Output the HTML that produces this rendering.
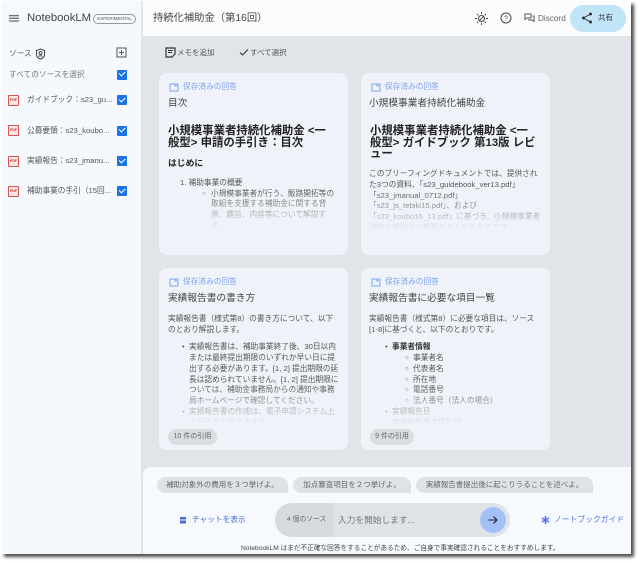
<!DOCTYPE html>
<html lang="ja"><head><meta charset="utf-8">
<style>
html,body{margin:0;padding:0;background:#fff}
body{width:640px;height:563px;overflow:hidden;position:relative;font-family:"Liberation Sans","Noto Sans CJK JP",sans-serif;color:#3c4043}
#all{position:absolute;left:0;top:0;width:640px;height:563px;filter:blur(.3px)}
#win{position:absolute;left:1px;top:1px;width:630px;height:553px;background:#e1e5ea;overflow:hidden}
#shadow{position:absolute;left:4px;top:4px;width:630px;height:553px;background:rgba(0,0,0,.7);filter:blur(1.5px)}
.a{position:absolute;white-space:nowrap}
#side{position:absolute;left:0;top:0;width:140px;height:553px;background:#f5f8fd}
#head{position:absolute;left:142px;top:0;width:488px;height:35px;background:#fbfcfe}
.src{font-size:7.7px;color:#555;line-height:12px}
.cb{position:absolute;left:116px;width:10px;height:10px;background:#1a73e8;border-radius:1px}
.cb:after{content:"";position:absolute;left:2.2px;top:1.6px;width:5px;height:2.6px;border-left:1.2px solid #fff;border-bottom:1.2px solid #fff;transform:rotate(-45deg)}
.pdf{position:absolute;left:7px;width:9px;height:9px;border:1px solid #d9534f;border-radius:1px;background:#fbe9e8;color:#c9302c;font-size:3.5px;line-height:9px;text-align:center;font-weight:bold}
.card{position:absolute;width:189px;height:182px;background:#eff3f9;border-radius:8px;overflow:hidden}
.tag{position:absolute;left:10px;top:8px;font-size:7.7px;line-height:12px;color:#7fa3ee;white-space:nowrap;padding-left:14px}
.tag svg{position:absolute;left:0;top:2px}
.ttl{position:absolute;left:9px;top:23px;font-size:9.7px;line-height:15px;color:#444;white-space:nowrap}
.h1{position:absolute;left:9px;top:53px;font-size:11.4px;line-height:11.5px;font-weight:bold;color:#222;white-space:nowrap}
.p{position:absolute;font-size:7.7px;line-height:10.8px;color:#555;white-space:nowrap}
.fade{position:absolute;left:0;top:117px;width:189px;height:40px;background:linear-gradient(to bottom,rgba(239,243,249,0),#eff3f9 100%)}
.solid{position:absolute;left:0;top:157px;width:189px;height:25px;background:#eff3f9}
.cite{position:absolute;left:9px;top:161px;height:16px;line-height:16px;border-radius:8px;background:#dadde0;font-size:7px;color:#666;white-space:nowrap;text-align:center}
.chip{position:absolute;top:477px;height:16px;line-height:16px;background:#dfe3e8;border-radius:8px 8px 0 8px;font-size:7.5px;color:#666;text-align:center;white-space:nowrap}
</style></head><body>
<div id="all">
<div id="shadow"></div>
<div id="win">
 <div id="side">
  <svg class="a" style="left:8px;top:13px" width="12" height="10"><path d="M0 1.700h10M0 4.300h10M0 7h10" stroke="#444" stroke-width="1"/></svg>
  <div class="a" style="left:26px;top:9px;font-size:11.300px;line-height:17px;color:#444;font-weight:500">NotebookLM</div>
  <div class="a" style="left:92px;top:13px;width:41px;height:8px;border:1px solid #999;border-radius:6px;font-size:4.500px;line-height:8px;text-align:center;color:#555">EXPERIMENTAL</div>
  <div class="a" style="left:8px;top:47px;font-size:7.700px;line-height:12px;color:#555">ソース</div>
  <svg class="a" style="left:34px;top:47px" width="11" height="12" viewBox="0 0 11 12"><path d="M5.500 1 9.500 2.500V6.500C9.500 9 7.500 10.500 5.500 11 3.500 10.500 1.500 9 1.500 6.500V2.500Z" fill="none" stroke="#444" stroke-width="1"/><circle cx="5.500" cy="5" r="1.500" fill="none" stroke="#444" stroke-width=".9"/><path d="M3.500 8.500C4.500 7.500 6.500 7.500 7.500 8.500" stroke="#444" fill="none" stroke-width=".9"/></svg>
  <svg class="a" style="left:115px;top:46px" width="11" height="11"><rect x="1" y="1" width="9" height="9" fill="none" stroke="#555" stroke-width="1"/><path d="M5.500 3v5M3 5.500h5" stroke="#555" stroke-width="1"/></svg>
  <div class="a src" style="left:8px;top:67.700px;color:#777">すべてのソースを選択</div><div class="cb" style="top:68.700px"></div>
  <div class="pdf" style="top:93.500px">PDF</div><div class="a src" style="left:26px;top:93px">ガイドブック：s23_gu...</div><div class="cb" style="top:94px"></div>
  <div class="pdf" style="top:124px">PDF</div><div class="a src" style="left:26px;top:124px">公募要領：s23_koubo...</div><div class="cb" style="top:124.700px"></div>
  <div class="pdf" style="top:154.500px">PDF</div><div class="a src" style="left:26px;top:154px">実績報告：s23_jmanu...</div><div class="cb" style="top:155px"></div>
  <div class="pdf" style="top:184.500px">PDF</div><div class="a src" style="left:26px;top:184px">補助事業の手引（15回...</div><div class="cb" style="top:185px"></div>
 </div>
 <div id="head"></div>
 <div class="a" style="left:152px;top:9px;font-size:10.300px;line-height:17px;color:#444">持続化補助金（第16回）</div>
 <svg class="a" style="left:473px;top:10px" width="15" height="15" viewBox="0 0 15 15"><circle cx="7.500" cy="7.500" r="3" fill="none" stroke="#444"/><path d="M7.500 1v2M7.500 12v2M1 7.500h2M12 7.500h2M3 3l1.400 1.400M10.600 10.600 12 12M3 12l1.400-1.400M10.600 4.400 12 3M5.500 9.500l4-4" stroke="#444" stroke-width=".9"/></svg>
 <svg class="a" style="left:499px;top:11px" width="12" height="12" viewBox="0 0 12 12"><circle cx="6" cy="6" r="5" fill="none" stroke="#444"/><text x="6" y="8.500" font-size="7" text-anchor="middle" fill="#444" font-family="Liberation Sans">?</text></svg>
 <svg class="a" style="left:523px;top:12px" width="11" height="9" viewBox="0 0 11 9"><path d="M1 1h6v4H3L1 6.500ZM8.500 3h1.500v5.500L8 7H4" fill="none" stroke="#555"/></svg>
 <div class="a" style="left:537px;top:10px;font-size:8.200px;line-height:15px;color:#666">Discord</div>
 <div class="a" style="left:569px;top:4px;width:56px;height:27px;border-radius:13.500px;background:#c2e4f8"></div>
 <svg class="a" style="left:580px;top:11px" width="12" height="12" viewBox="0 0 12 12"><path d="M9.500 2 2.500 6 9.500 10" fill="none" stroke="#333" stroke-width="1"/><circle cx="9.500" cy="2" r="1.500" fill="#333"/><circle cx="2.500" cy="6" r="1.500" fill="#333"/><circle cx="9.500" cy="10" r="1.500" fill="#333"/></svg>
 <div class="a" style="left:597px;top:10px;font-size:7.500px;line-height:14px;color:#333">共有</div>

 <svg class="a" style="left:164px;top:46px" width="12" height="11" viewBox="0 0 12 11"><path d="M1 1h9v6l-3 3H1Z" fill="none" stroke="#333" stroke-width="1.200"/><path d="M3 3.500h5M3 5.500h4" stroke="#333"/></svg>
 <div class="a" style="left:176px;top:45px;font-size:7.500px;line-height:13px;color:#555">メモを追加</div>
 <svg class="a" style="left:238px;top:47px" width="10" height="9" viewBox="0 0 10 9"><path d="M1 4.500 3.500 7 9 1.500" fill="none" stroke="#333" stroke-width="1.100"/></svg>
 <div class="a" style="left:249px;top:45px;font-size:7.500px;line-height:13px;color:#555">すべて選択</div>

 <div class="card" style="left:158px;top:72px">
  <div class="tag"><svg width="10" height="9" viewBox="0 0 10 9"><path d="M6 1H1v7h8V4M6 1h3v2H6Z" fill="none" stroke="#7fa3ee"/></svg>保存済みの回答</div>
  <div class="ttl">目次</div>
  <div class="h1">小規模事業者持続化補助金 &lt;一<br>般型&gt; 申請の手引き：目次</div>
  <div class="a" style="left:9px;top:84px;font-size:8.800px;line-height:13px;font-weight:bold;color:#222">はじめに</div>
  <div class="p" style="left:21px;top:104px;line-height:12px">1. 補助事業の概要</div>
  <div class="p" style="left:43px;top:115.600px;font-size:6px">○</div>
  <div class="p" style="left:52px;top:115.600px;line-height:10.700px">小規模事業者が行う、販路開拓等の<br>取組を支援する補助金に関する背<br>景、趣旨、内容等について解説す<br>る。</div>
  <div class="fade"></div><div class="solid"></div>
 </div>
 <div class="card" style="left:360px;top:72px">
  <div class="tag"><svg width="10" height="9" viewBox="0 0 10 9"><path d="M6 1H1v7h8V4M6 1h3v2H6Z" fill="none" stroke="#7fa3ee"/></svg>保存済みの回答</div>
  <div class="ttl" style="left:8px">小規模事業者持続化補助金</div>
  <div class="h1">小規模事業者持続化補助金 &lt;一<br>般型&gt; ガイドブック 第13版 レビ<br>ュー</div>
  <div class="p" style="left:8px;top:96px;line-height:10.750px">このブリーフィングドキュメントでは、提供され<br>た3つの資料、「s23_guidebook_ver13.pdf」<br>「s23_jmanual_0712.pdf」<br>「s23_js_tebiki15.pdf」、および<br>「s23_koubo16_13.pdf」に基づき、小規模事業者<br>持続化補助金の概要をまとめたものです。</div>
  <div class="fade"></div><div class="solid"></div>
 </div>
 <div class="card" style="left:158px;top:267px">
  <div class="tag"><svg width="10" height="9" viewBox="0 0 10 9"><path d="M6 1H1v7h8V4M6 1h3v2H6Z" fill="none" stroke="#7fa3ee"/></svg>保存済みの回答</div>
  <div class="ttl">実績報告書の書き方</div>
  <div class="p" style="left:9px;top:45px;line-height:11px">実績報告書（様式第8）の書き方について、以下<br>のとおり解説します。</div>
  <div class="p" style="left:23px;top:74.300px">•<br><br><br><br><br><br>•</div>
  <div class="p" style="left:30px;top:74.300px">実績報告書は、補助事業終了後、30日以内<br>または最終提出期限のいずれか早い日に提<br>出する必要があります。[1, 2] 提出期限の延<br>長は認められていません。[1, 2] 提出期限に<br>ついては、補助金事務局からの通知や事務<br>局ホームページで確認してください。<br>実績報告書の作成は、電子申請システム上<br>で行うことができます。</div>
  <div class="fade"></div><div class="solid"></div>
  <div class="cite" style="width:49px">10 件の引用</div>
 </div>
 <div class="card" style="left:360px;top:267px">
  <div class="tag"><svg width="10" height="9" viewBox="0 0 10 9"><path d="M6 1H1v7h8V4M6 1h3v2H6Z" fill="none" stroke="#7fa3ee"/></svg>保存済みの回答</div>
  <div class="ttl" style="left:8px">実績報告書に必要な項目一覧</div>
  <div class="p" style="left:8px;top:45px;line-height:11px">実績報告書（様式第8）に必要な項目は、ソース<br>[1-8]に基づくと、以下のとおりです。</div>
  <div class="p" style="left:24px;top:74.300px">•<br><br><br><br><br><br>•</div>
  <div class="p" style="left:31px;top:74.300px"><b style="color:#333">事業者情報</b></div>
  <div class="p" style="left:44px;top:85.100px;font-size:6px">○<br>○<br>○<br>○<br>○</div>
  <div class="p" style="left:52px;top:85.100px">事業者名<br>代表者名<br>所在地<br>電話番号<br>法人番号（法人の場合）</div>
  <div class="p" style="left:31px;top:139.100px">実績報告日<br>実績報告書の提出日</div>
  <div class="fade"></div><div class="solid"></div>
  <div class="cite" style="width:44px">9 件の引用</div>
 </div>

 <div class="a" style="left:142px;top:466px;width:488px;height:87px;background:#f6f9fe;border-radius:8px 0 0 0"></div>
</div>
<div class="chip" style="left:157px;width:131px">補助対象外の費用を３つ挙げよ。</div>
<div class="chip" style="left:293px;width:118px">加点審査項目を２つ挙げよ。</div>
<div class="chip" style="left:416px;width:177px">実績報告書提出後に起こりうることを述べよ。</div>
<svg class="a" style="left:180px;top:517px" width="7" height="7"><rect width="6" height="2.500" y="0" fill="#4a6fd0"/><rect width="6" height="3" y="3.500" fill="#4a6fd0"/></svg>
<div class="a" style="left:192px;top:513px;font-size:7.700px;line-height:14px;color:#4c6fd4">チャットを表示</div>
<div class="a" style="left:275px;top:503px;width:235px;height:34px;border-radius:17px;background:#dfe3e8;overflow:hidden"><div class="a" style="left:0;top:0;width:58px;height:34px;background:#d7dbe0"></div></div>
<div class="a" style="left:287px;top:514px;font-size:6.800px;line-height:12px;color:#666">4 個のソース</div>
<div class="a" style="left:338px;top:513px;font-size:8.700px;line-height:14px;color:#777">入力を開始します...</div>
<div class="a" style="left:480px;top:507px;width:26px;height:26px;border-radius:50%;background:#a3c1f7"></div>
<svg class="a" style="left:487px;top:514px" width="12" height="12" viewBox="0 0 12 12"><path d="M1.500 6h8.500M6.500 2.500 10 6 6.500 9.500" fill="none" stroke="#222" stroke-width="1.100"/></svg>
<svg class="a" style="left:541px;top:515px" width="9" height="10" viewBox="0 0 9 10"><path d="M4.500 1v8M1 3l7 4M8 3 1 7" stroke="#5a6fe0" stroke-width="1.500"/></svg>
<div class="a" style="left:554px;top:513px;font-size:7.800px;line-height:14px;color:#5a78dd">ノートブックガイド</div>
<div class="a" style="left:241px;top:543px;font-size:6.670px;line-height:11px;color:#444">NotebookLM はまだ不正確な回答をすることがあるため、ご自身で事実確認されることをおすすめします。</div>
</div>
</body></html>
